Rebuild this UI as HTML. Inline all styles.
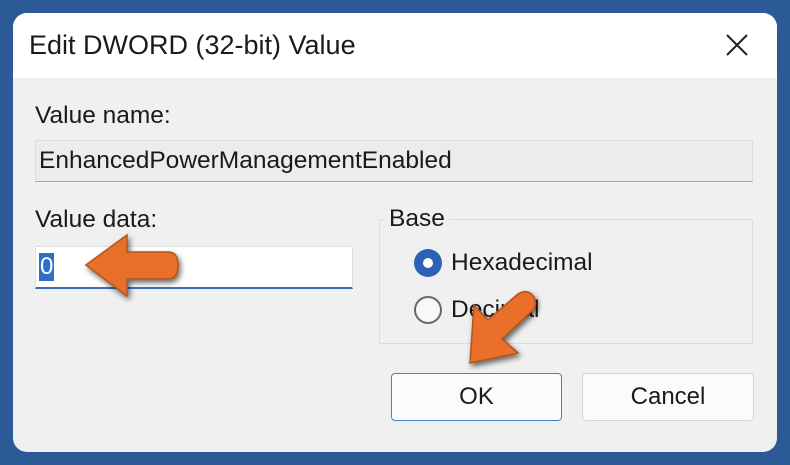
<!DOCTYPE html>
<html><head><style>
body{margin:0;width:790px;height:465px;background:#2b5a96;position:relative;overflow:hidden;font-family:"Liberation Sans",sans-serif;color:#1a1a1a}
.dlg{position:absolute;left:13px;top:13px;width:764px;height:439px;background:#f0f0f0;border-radius:14px;overflow:hidden}
.title{position:absolute;left:0;top:0;width:100%;height:65px;background:#fff}
.abs{position:absolute}
.lbl{font-size:24.5px}
</style></head><body>
<div class="dlg">
 <div class="title"></div>
 <div class="abs" style="left:16px;top:17px;font-size:27px">Edit DWORD (32-bit) Value</div>
 <svg class="abs" style="left:712px;top:20px" width="24" height="24"><path d="M2 2L22 22M22 2L2 22" stroke="#222" stroke-width="2"/></svg>
 <div class="abs lbl" style="left:22px;top:89px">Value name:</div>
 <div class="abs" style="left:22px;top:127px;width:718px;height:42px;background:#ececec;border:1px solid #ddd;border-bottom-color:#aaa;font-size:24.5px;line-height:40px;padding-left:3px;box-sizing:border-box">EnhancedPowerManagementEnabled</div>
 <div class="abs lbl" style="left:22px;top:193px">Value data:</div>
 <div class="abs" style="left:22px;top:233px;width:318px;height:43px;background:#fff;border:1px solid #e0e0e0;border-bottom:2px solid #3a6fb8;box-sizing:border-box"><span class="abs" style="left:3px;top:6px;background:#2f6fc8;color:#fff;font-size:24px;line-height:28px;padding:0 1px">0</span></div>
 <div class="abs" style="left:366px;top:206px;width:374px;height:125px;border:1px solid #dcdcdc;box-sizing:border-box"></div>
 <div class="abs lbl" style="left:372px;top:192px;background:#f0f0f0;padding:0 4px">Base</div>
 <div class="abs" style="left:401px;top:236px;width:28px;height:28px;border-radius:50%;background:#2c62b5"><div class="abs" style="left:9px;top:9px;width:10px;height:10px;border-radius:50%;background:#fff"></div></div>
 <div class="abs lbl" style="left:438px;top:236px">Hexadecimal</div>
 <div class="abs" style="left:401px;top:283px;width:28px;height:28px;border-radius:50%;border:2px solid #666;box-sizing:border-box;background:#f8f8f8"></div>
 <div class="abs lbl" style="left:438px;top:283px">Decimal</div>
 <div class="abs" style="left:378px;top:360px;width:171px;height:48px;border:1px solid #4a80c8;border-radius:4px;background:#fbfbfb;box-sizing:border-box;text-align:center;line-height:46px;font-size:24px">OK</div>
 <div class="abs" style="left:569px;top:360px;width:172px;height:48px;border:1px solid #d4d4d4;border-radius:4px;background:#fbfbfb;box-sizing:border-box;text-align:center;line-height:46px;font-size:24px">Cancel</div>
</div>
<svg class="abs" style="left:0;top:0" width="790" height="465">
 <defs><filter id="s"><feDropShadow dx="2" dy="3" stdDeviation="3" flood-color="#000" flood-opacity="0.6"/></filter></defs>
 <path d="M86 265L127 235L127 252L168 252Q178 252 178 265Q178 279 168 279L127 279L127 296Z" fill="#e8702c" stroke="#b55316" stroke-width="1.5" filter="url(#s)"/>
 <path d="M470 363L474 305L488 320L518 294Q528 288 534 297Q538 306 531 312L502 339L518 353Z" fill="#e8702c" stroke="#b55316" stroke-width="1.5" filter="url(#s)"/>
</svg>
</body></html>
